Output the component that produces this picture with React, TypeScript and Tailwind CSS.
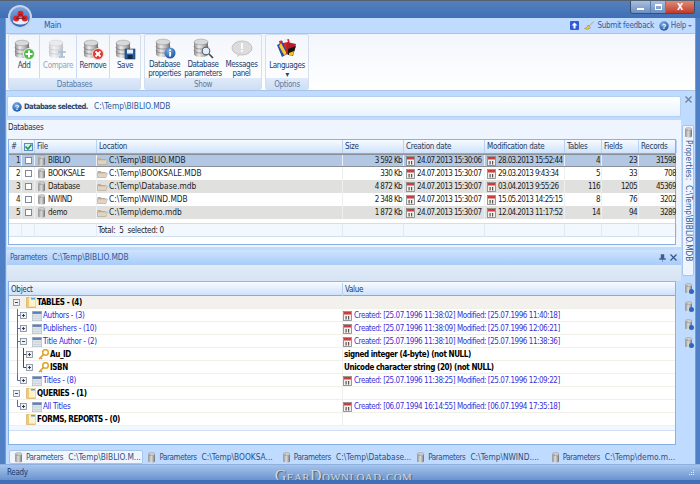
import React from "react";

const Defs = () => (
  <svg width="0" height="0" className="absolute">
    <defs>
      <linearGradient id="cyl" x1="0" x2="1" y1="0" y2="0">
        <stop offset="0" stopColor="#8d8d8d" />
        <stop offset="0.35" stopColor="#ececec" />
        <stop offset="0.7" stopColor="#b5b5b5" />
        <stop offset="1" stopColor="#6e6e6e" />
      </linearGradient>
      <radialGradient id="blueball" cx="0.4" cy="0.3" r="0.8">
        <stop offset="0" stopColor="#7fb2ec" />
        <stop offset="1" stopColor="#0f4a9c" />
      </radialGradient>
    </defs>
  </svg>
);

function Cyl({ faded }: { faded?: boolean }) {
  return (
    <g opacity={faded ? 0.4 : 1}>
      <path d="M2 4v12c0 2 3 3 7 3s7-1 7-3V4z" fill="url(#cyl)" />
      <ellipse cx="9" cy="4" rx="7" ry="2.8" fill="#d9d9d9" stroke="#8a8a8a" strokeWidth="0.5" />
      <path d="M2 8c0 2 3 3 7 3s7-1 7-3M2 12c0 2 3 3 7 3s7-1 7-3" fill="none" stroke="#7d7d7d" strokeWidth="0.7" />
    </g>
  );
}

function RibbonIcon({ kind }: { kind: string }) {
  if (kind === "messages")
    return (
      <svg width="22" height="20" viewBox="0 0 22 20">
        <ellipse cx="11" cy="9" rx="10" ry="7" fill="#dcdcdc" stroke="#c2c2c2" />
        <path d="M7 14l-1 4 5-3z" fill="#cfcfcf" />
        <rect x="10" y="4" width="2" height="6" fill="#fafafa" />
        <rect x="10" y="11" width="2" height="2" fill="#fafafa" />
      </svg>
    );
  if (kind === "lang")
    return (
      <svg width="22" height="22" viewBox="0 0 22 22">
        <path d="M3 3l10-2 2 12-9 3z" fill="#d9232e" />
        <path d="M1 7l6-3 4 12-5 3z" fill="#2b46b5" />
        <path d="M5 5l6 11-3 1L3 8z" fill="#f0d020" />
        <path d="M11 4l9 2-3 12-7-2z" fill="#b51d2c" />
        <path d="M12 11l8-3-2 6-6 3z" fill="#141414" />
        <path d="M13 15l5-2-1 4-4 1z" fill="#f3c21a" />
        <path d="M6 2l5-1 1 3-5 1z" fill="#f4f4f4" />
      </svg>
    );
  return (
    <svg width="22" height="21" viewBox="0 0 22 21">
      <Cyl faded={kind === "compare"} />
      {kind === "add" && (
        <g>
          <circle cx="16" cy="15" r="5.5" fill="#4db84a" stroke="#e9f7e6" />
          <path d="M16 11.5v7M12.5 15h7" stroke="#fff" strokeWidth="2" />
        </g>
      )}
      {kind === "compare" && <path d="M11 13h8M15 11v7M12 18h6" stroke="#a9bdd6" strokeWidth="1.4" fill="none" />}
      {kind === "remove" && (
        <g>
          <circle cx="16" cy="15" r="5.5" fill="#d9382e" stroke="#f6d9d5" />
          <path d="M13.5 12.5l5 5M18.5 12.5l-5 5" stroke="#fff" strokeWidth="1.8" />
        </g>
      )}
      {kind === "save" && (
        <g>
          <rect x="11" y="10" width="10" height="10" fill="#2d5f9e" stroke="#173b6b" strokeWidth="0.6" />
          <rect x="13" y="10.5" width="6" height="4" fill="#e6eef8" />
          <rect x="13.5" y="16" width="5" height="4" fill="#13294a" />
        </g>
      )}
      {kind === "info" && (
        <g>
          <circle cx="16" cy="15" r="5.5" fill="url(#blueball)" />
          <rect x="15.2" y="14" width="1.8" height="4.5" fill="#fff" />
          <rect x="15.2" y="11.5" width="1.8" height="1.6" fill="#fff" />
        </g>
      )}
      {kind === "search" && (
        <g>
          <circle cx="14" cy="13" r="3.8" fill="#e4eef8" stroke="#55606c" strokeWidth="1.1" />
          <path d="M17 16l4 4" stroke="#45494e" strokeWidth="1.7" />
        </g>
      )}
    </svg>
  );
}

function RBtn({ kind, lines, w, muted, sep }: { kind: string; lines: string[]; w: string; muted?: boolean; sep?: boolean }) {
  return (
    <div className={`flex flex-col items-center pt-[3px] ${w} ${sep ? "border-r border-r-[#c9dcf4]" : ""}`}>
      <div className="h-[22px] flex items-center justify-center">
        <RibbonIcon kind={kind} />
      </div>
      <div className={`mt-[1px] text-center leading-[9px] tracking-[-0.4px] whitespace-nowrap ${muted ? "text-[#98a2ad]" : "text-[#22406f]"}`}>
        {lines.map((l) => (
          <div key={l}>{l}</div>
        ))}
      </div>
    </div>
  );
}

function RGroup({ title, width, children }: { title: string; width: string; children: React.ReactNode }) {
  return (
    <div className={`${width} h-[56px] flex flex-col rounded-[2px] border border-[#d3dfef] bg-gradient-to-b from-[#f3f6fb] to-[#ffffff]`}>
      <div className="flex-1 flex min-h-0">{children}</div>
      <div className="h-[11px] shrink-0 bg-gradient-to-b from-[#dfeafa] to-[#cfdff3] text-center leading-[13px] text-[#5b7aa8]">{title}</div>
    </div>
  );
}

const Cal = () => (
  <svg width="9" height="10" viewBox="0 0 9 10" className="shrink-0">
    <rect x="0.5" y="0.5" width="8" height="9" fill="#f3f1ee" stroke="#7f7f7f" strokeWidth="0.8" />
    <rect x="1" y="1" width="7" height="2.5" fill="#cf3b3b" />
    <rect x="2.5" y="5" width="1.2" height="3.5" fill="#555" />
    <rect x="5" y="5" width="1.2" height="3.5" fill="#555" />
  </svg>
);

const SmallDb = () => (
  <svg width="9" height="11" viewBox="0 0 9 11" className="shrink-0">
    <path d="M1 2v7c0 1 1.5 1.6 3.5 1.6S8 10 8 9V2z" fill="url(#cyl)" />
    <ellipse cx="4.5" cy="2" rx="3.5" ry="1.5" fill="#cfcfcf" stroke="#888" strokeWidth="0.4" />
    <path d="M3 2v8" stroke="#666" strokeWidth="0.5" />
  </svg>
);

const FolderIcon = () => (
  <svg width="11" height="9" viewBox="0 0 11 9" className="shrink-0">
    <path d="M0.5 2h3l1 1h4v5.5h-8z" fill="#bfae9a" />
    <path d="M0.5 4h10l-1.5 4.5h-8.5z" fill="#e0d3c3" stroke="#a99a87" strokeWidth="0.4" />
  </svg>
);

const rows = [
  ["1", "BIBLIO", "C:\\Temp\\BIBLIO.MDB", "3 592 Kb", "24.07.2013 15:30:06", "28.03.2013 15:52:44", "4", "23", "31598"],
  ["2", "BOOKSALE", "C:\\Temp\\BOOKSALE.MDB", "330 Kb", "24.07.2013 15:30:07", "29.03.2013 9:43:34", "5", "33", "708"],
  ["3", "Database", "C:\\Temp\\Database.mdb", "4 872 Kb", "24.07.2013 15:30:07", "03.04.2013 9:55:26", "116", "1205", "45369"],
  ["4", "NWIND", "C:\\Temp\\NWIND.MDB", "2 348 Kb", "24.07.2013 15:30:07", "15.05.2013 14:25:15", "8", "76", "3202"],
  ["5", "demo", "C:\\Temp\\demo.mdb", "1 872 Kb", "24.07.2013 15:30:07", "12.04.2013 11:17:52", "14", "94", "3289"],
];

const cols = "grid grid-cols-[13px_13px_62px_246px_61px_81px_80px_37px_37px_38px]";
const heads = ["#", "", "File", "Location", "Size", "Creation date", "Modification date", "Tables", "Fields", "Records"];
const num = "tracking-[-0.6px]";

function DbRow({ r, i }: { r: string[]; i: number }) {
  const bg = i === 0 ? "bg-[#b2c7e4] border-y border-[#8b8f96]" : i % 2 === 0 ? "bg-[#e0e0de]" : "bg-white";
  const cell = "border-r border-r-[#edf0f3] flex items-center overflow-hidden whitespace-nowrap";
  return (
    <div className={`${cols} h-[13px] text-[#222] ${bg}`}>
      <div className={`${cell} ${num} justify-end pr-[1px]`}>{r[0]}</div>
      <div className={`${cell} justify-center`}>
        <span className="w-[7px] h-[7px] border border-[#7f8a99] bg-white" />
      </div>
      <div className={`${cell} pl-[2px] gap-[1px]`}>
        <SmallDb />
        <span className="ml-[1px]">{r[1]}</span>
      </div>
      <div className={`${cell} gap-[1px]`}>
        <FolderIcon />
        <span className="text-[8.3px] tracking-normal">{r[2]}</span>
      </div>
      <div className={`${cell} ${num} justify-end pr-[1px]`}>{r[3]}</div>
      <div className={`${cell} ${num} pl-[2px] gap-[2px]`}>
        <Cal />
        {r[4]}
      </div>
      <div className={`${cell} ${num} pl-[2px] gap-[2px]`}>
        <Cal />
        {r[5]}
      </div>
      <div className={`${cell} ${num} justify-end pr-[1px]`}>{r[6]}</div>
      <div className={`${cell} ${num} justify-end pr-[1px]`}>{r[7]}</div>
      <div className={`${cell} ${num} justify-end`}>{r[8]}</div>
    </div>
  );
}

function Expander({ x, open }: { x: number; open?: boolean }) {
  return (
    <g>
      <rect x={x + 0.5} y="3.5" width="6" height="6" fill="#eef1f5" stroke="#7c8798" strokeWidth="0.8" />
      <path d={`M${x + 2} 6.5h3`} stroke="#333" strokeWidth="0.9" />
      {!open && <path d={`M${x + 3.5} 5v3`} stroke="#333" strokeWidth="0.9" />}
    </g>
  );
}

const TableIcon = () => (
  <svg width="10" height="10" viewBox="0 0 10 10" className="shrink-0">
    <rect x="0" y="0" width="10" height="10" fill="#dfe4ea" stroke="#8c97a6" strokeWidth="0.6" />
    <rect x="0.5" y="0.5" width="9" height="2.4" fill="#5f7fae" />
    <path d="M0 5h10M0 7.5h10" stroke="#bcc5d0" strokeWidth="0.5" />
  </svg>
);
const NodeFolder = () => (
  <svg width="10" height="12" viewBox="0 0 10 12" className="shrink-0">
    <path d="M0.5 1.5h9v10h-9z" fill="#f1c873" stroke="#c79c45" strokeWidth="0.5" />
    <path d="M3 1.5h6.5v9H3z" fill="#fff2cf" />
    <path d="M5 2h4v1.5H5z" fill="#4aa3dd" />
  </svg>
);
const KeyIcon = () => (
  <svg width="11" height="11" viewBox="0 0 11 11" className="shrink-0">
    <circle cx="7.5" cy="3.5" r="2.8" fill="none" stroke="#e0a92e" strokeWidth="1.6" />
    <path d="M5.5 5.5L1 10M2.5 8.5l1.5 1.5" stroke="#d69c24" strokeWidth="1.5" fill="none" />
  </svg>
);

type Node = { lead: number; lines?: React.ReactNode; icon: React.ReactNode; text: string; cls: string; val?: string; valBold?: boolean; shade?: boolean };

const pl = "#3f4fd8";
const branch = (last?: boolean) => <path d={`M16.5 0V${last ? 6.5 : 13}M16.5 6.5H19`} stroke={pl} strokeWidth="0.9" fill="none" />;
const boldC = "font-bold text-black tracking-[-0.4px]";
const linkC = "text-[#2b2bdc]";

const nodes: Node[] = [
  { lead: 24, lines: <Expander x={12} open />, icon: <NodeFolder />, text: "TABLES - (4)", cls: boldC, shade: true },
  { lead: 30, lines: <>{branch()}<Expander x={19} /></>, icon: <TableIcon />, text: "Authors - (3)", cls: linkC, val: "Created: [25.07.1996 11:38:02] Modified: [25.07.1996 11:40:18]" },
  { lead: 30, lines: <>{branch()}<Expander x={19} /></>, icon: <TableIcon />, text: "Publishers - (10)", cls: linkC, val: "Created: [25.07.1996 11:38:09] Modified: [25.07.1996 12:06:21]" },
  { lead: 30, lines: <>{branch()}<Expander x={19} open /></>, icon: <TableIcon />, text: "Title Author - (2)", cls: linkC, val: "Created: [25.07.1996 11:38:10] Modified: [25.07.1996 11:38:36]" },
  { lead: 36, lines: <><path d="M16.5 0V13" stroke="#777" strokeWidth="0.9" /><path d="M22.5 0V13M22.5 6.5H25" stroke="#333" strokeWidth="0.9" fill="none" /><Expander x={25} /></>, icon: <KeyIcon />, text: "Au_ID", cls: boldC, val: "signed integer (4-byte) (not NULL)", valBold: true },
  { lead: 36, lines: <><path d="M16.5 0V13" stroke="#777" strokeWidth="0.9" /><path d="M22.5 0V6.5H25" stroke="#333" strokeWidth="0.9" fill="none" /><Expander x={25} /></>, icon: <KeyIcon />, text: "ISBN", cls: boldC, val: "Unicode character string (20) (not NULL)", valBold: true },
  { lead: 30, lines: <>{branch(true)}<Expander x={19} /></>, icon: <TableIcon />, text: "Titles - (8)", cls: linkC, val: "Created: [25.07.1996 11:38:25] Modified: [25.07.1996 12:09:22]" },
  { lead: 24, lines: <Expander x={12} open />, icon: <NodeFolder />, text: "QUERIES - (1)", cls: boldC },
  { lead: 30, lines: <>{branch(true)}<Expander x={19} /></>, icon: <TableIcon />, text: "All Titles", cls: linkC, val: "Created: [06.07.1994 16:14:55] Modified: [06.07.1994 17:35:18]" },
  { lead: 24, icon: <NodeFolder />, text: "FORMS, REPORTS - (0)", cls: boldC },
];

function TreeRow({ n }: { n: Node }) {
  return (
    <div className={`grid grid-cols-[334px_1fr] h-[13px] shrink-0 border-b border-b-[#f0efe8] ${n.shade ? "bg-[#f2f1ed]" : "bg-white"}`}>
      <div className="flex items-center border-r border-r-[#eeeeea] overflow-hidden whitespace-nowrap">
        <svg width={n.lead} height="13" viewBox={`0 0 ${n.lead} 13`} className="shrink-0 -ml-[8px]">
          {n.lines}
        </svg>
        <span className="ml-[1px] flex">{n.icon}</span>
        <span className={`ml-[1px] ${n.cls}`}>{n.text}</span>
      </div>
      <div className={`flex items-center gap-[2px] whitespace-nowrap ${n.valBold ? "pl-[1px] font-bold text-black tracking-[-0.4px]" : "text-[#3a30d8] tracking-[-0.45px]"}`}>
        {n.val && !n.valBold && <Cal />}
        {n.val}
      </div>
    </div>
  );
}

const Tab = ({ path, active }: { path: string; active?: boolean }) => (
  <div className={`w-[134.5px] h-[14px] flex items-center pl-[4px] whitespace-nowrap text-[#2e4f80] rounded-[2px] ${active ? "bg-[#eff5fd] border border-[#a4c4ec]" : ""}`}>
    <SmallDb />
    <span className="ml-[3px] tracking-[-0.4px]">Parameters</span>
    <span className="ml-[5px] text-[8.3px] tracking-normal">{path}</span>
  </div>
);

const HelpBall = () => (
  <svg width="10" height="10" viewBox="0 0 10 10" className="shrink-0">
    <circle cx="5" cy="5" r="4.7" fill="url(#blueball)" />
    <text x="5" y="7.8" textAnchor="middle" fontSize="7.5" fontWeight="700" fill="#fff" fontFamily="Liberation Sans">?</text>
  </svg>
);

export default function App() {
  return (
    <div className="relative w-[700px] h-[484px] overflow-hidden flex flex-col bg-[#4f7fc4] text-[8px] leading-[13px] tracking-[-0.3px] font-['DejaVu_Sans_Condensed','Liberation_Sans',sans-serif]">
      <Defs />
      {/* title bar */}
      <div className="h-[18px] shrink-0 flex justify-end bg-gradient-to-b from-[#5580bd] to-[#3f6fb6] border-t border-t-[#54606e]">
        <div className="flex h-[13px] w-[65px] mr-[5px] rounded-b-[3px] overflow-hidden border border-t-0 border-[#3a4f70]">
          <div className="w-[19px] flex items-center justify-center bg-gradient-to-b from-[#a8bfe0] to-[#6d8fc2]">
            <span className="mt-[4px] w-[7px] h-[2px] bg-white" />
          </div>
          <div className="w-[16px] flex items-center justify-center bg-gradient-to-b from-[#a8bfe0] to-[#6d8fc2] border-x border-x-[#5d7eaf]">
            <span className="w-[7px] h-[6px] border border-t-2 border-white" />
          </div>
          <div className="flex-1 flex items-center justify-center bg-gradient-to-b from-[#dc8a78] to-[#bf3a28] text-white font-bold text-[9px] leading-none">X</div>
        </div>
      </div>

      {/* logo orb */}
      <div className="absolute left-[8px] top-[5px] w-[24px] h-[24px] rounded-full border-2 border-[#c6d5e8] bg-gradient-to-b from-[#7fa6dc] to-[#2f68bf] flex items-center justify-center">
        <svg width="17" height="15" viewBox="0 0 16 14">
          <ellipse cx="8" cy="10.5" rx="7" ry="3.2" fill="#e8eef8" />
          <circle cx="8" cy="3.5" r="2.8" fill="#d8232a" />
          <circle cx="4" cy="8" r="2.8" fill="#d8232a" />
          <circle cx="12" cy="8" r="2.8" fill="#d8232a" />
          <path d="M8 3.5L4 8M8 3.5l4 4.5M4 8h8" stroke="#7d0f14" strokeWidth="0.8" />
        </svg>
      </div>

      <div className="flex-1 min-h-0 flex flex-col ml-[5px] mr-[4px] bg-[#bfdbff] border-x border-x-[#7b9cc8]">
        {/* tab strip */}
        <div className="h-[15px] shrink-0 flex items-center pl-[38px] pr-[2px] text-[#22406f] bg-[#bfdbff]">
          <span className="text-[#2a5a9e] text-[8.5px]">Main</span>
          <div className="ml-auto flex items-center text-[#3a5a95]">
            <span className="w-[9px] h-[9px] rounded-[1px] bg-[#3358d8] text-white flex items-center justify-center">
              <svg width="7" height="7" viewBox="0 0 7 7"><path d="M3.5 0.5L6.5 3.5H4.5V6.5H2.5V3.5H0.5z" fill="#fff" /></svg>
            </span>
            <svg width="11" height="9" viewBox="0 0 11 9" className="ml-[5px] mr-[2px]">
              <path d="M10 0.5L5 5M0.5 7.5c2 1 5 1 6-1L4 4C3.5 6 2 7 0.5 7.5z" fill="#e8c64f" stroke="#a98b25" strokeWidth="0.6" />
            </svg>
            <span>Submit feedback</span>
            <span className="ml-[5px] mr-[2px]"><HelpBall /></span>
            <span>Help</span>
            <span className="ml-[2px] mr-[1px] border-x-[2px] border-t-[2px] border-x-transparent border-t-[#5a74a0]" />
          </div>
        </div>

        {/* ribbon */}
        <div className="h-[58px] shrink-0 flex gap-[3px] pl-[2px] bg-gradient-to-b from-[#f2f6fc] to-[#ffffff] border-y border-y-[#a9c4e6]">
          <RGroup title="Databases" width="w-[133px]">
            <RBtn kind="add" lines={["Add"]} w="w-[31px]" sep />
            <RBtn kind="compare" lines={["Compare"]} w="w-[37px]" muted sep />
            <RBtn kind="remove" lines={["Remove"]} w="w-[33px]" sep />
            <RBtn kind="save" lines={["Save"]} w="w-[30px]" />
          </RGroup>
          <RGroup title="Show" width="w-[118px]">
            <RBtn kind="info" lines={["Database", "properties"]} w="w-[39px]" />
            <RBtn kind="search" lines={["Database", "parameters"]} w="w-[38px]" />
            <RBtn kind="messages" lines={["Messages", "panel"]} w="w-[39px]" />
          </RGroup>
          <RGroup title="Options" width="w-[44px]">
            <RBtn kind="lang" lines={["Languages", "▾"]} w="w-[42px]" />
          </RGroup>
        </div>

        {/* main area */}
        <div className="flex-1 min-h-0 flex">
          <div className="w-[675px] shrink-0 flex flex-col pl-[1px]">
            {/* info bar */}
            <div className="mt-[5px] h-[21px] shrink-0 flex items-center pl-[4px] rounded-[2px] border border-[#b5d0f0] bg-gradient-to-b from-[#ffffff] to-[#e8f3fe]">
              <HelpBall />
              <span className="ml-[2px] font-bold text-[7.5px] tracking-[-0.5px] text-[#27466f]">Database selected.</span>
              <span className="ml-[6px] text-[8.3px] tracking-normal text-[#2b5a9c]">C:\Temp\BIBLIO.MDB</span>
            </div>

            {/* Databases panel */}
            <div className="mt-[3px] h-[127px] shrink-0 flex flex-col px-[1px] bg-[#eef5fe]">
              <div className="h-[19px] shrink-0 pt-[1px] text-[#1d3152]">Databases</div>
              <div className="h-[106px] w-[668px] shrink-0 flex flex-col border border-[#84b2e8] bg-white">
                <div className={`${cols} h-[14px] shrink-0 border-b border-b-[#7eaee6] bg-gradient-to-b from-[#f8fbff] to-[#cfe2fb] text-[#243a5c]`}>
                  {heads.map((h, i) => (
                    <div key={i} className="border-r border-r-[#b9d2f2] pl-[2px] flex items-center whitespace-nowrap overflow-hidden">
                      {i === 1 ? (
                        <span className="w-[9px] h-[8px] border border-[#5a8abf] bg-[#dcebfa] flex items-center justify-center">
                          <svg width="7" height="6" viewBox="0 0 7 6"><path d="M0.5 2.5L3 5l3.5-4.5" stroke="#1f9a3a" strokeWidth="1.6" fill="none" /></svg>
                        </span>
                      ) : (
                        h
                      )}
                    </div>
                  ))}
                </div>
                {rows.map((r, i) => (
                  <DbRow key={r[0]} r={r} i={i} />
                ))}
                <div className="h-[4px] shrink-0" />
                <div className={`${cols} h-[14px] shrink-0 border-y border-y-[#cfe0f6] bg-[#f3f8fe] text-[#222]`}>
                  {heads.map((h, i) => (
                    <div key={i} className="border-r border-r-[#e3e9f0] pl-[1px] flex items-center whitespace-pre">
                      {i === 3 ? "Total:  5  selected: 0" : ""}
                    </div>
                  ))}
                </div>
              </div>
            </div>

            {/* Parameters panel */}
            <div className="mt-[3px] flex-1 min-h-0 flex flex-col">
              <div className="h-[15px] shrink-0 flex items-center pl-[3px] pr-[4px] bg-gradient-to-b from-[#cfe3fd] to-[#a9ccf8] text-[#2c5a9c]">
                <span className="tracking-[-0.4px]">Parameters</span>
                <span className="ml-[5px] text-[8.3px] tracking-normal">C:\Temp\BIBLIO.MDB</span>
                <svg width="7" height="8" viewBox="0 0 7 8" className="ml-auto">
                  <path d="M2 0.5h3v4h1.5v1h-6v-1H2zM3.5 5.5V8" fill="#3f5f92" stroke="#3f5f92" strokeWidth="0.5" />
                </svg>
                <svg width="7" height="7" viewBox="0 0 7 7" className="ml-[4px]">
                  <path d="M0.5 0.5l6 6M6.5 0.5l-6 6" stroke="#33558a" strokeWidth="1.2" />
                </svg>
              </div>
              <div className="h-[16px] shrink-0 bg-gradient-to-b from-[#e1ebf7] to-[#d5e3f4]" />
              <div className="h-[164px] w-[668px] ml-[1px] shrink-0 flex flex-col border border-[#84b2e8] border-t-[#8db8ec] bg-white">
                <div className="grid grid-cols-[334px_1fr] h-[14px] shrink-0 pt-[1px] border-b border-b-[#7eaee6] bg-gradient-to-b from-[#f8fbff] to-[#cfe2fb] text-[#243a5c]">
                  <div className="border-r border-r-[#b9d2f2] pl-[2px] flex items-center">Object</div>
                  <div className="pl-[2px] flex items-center">Value</div>
                </div>
                {nodes.map((n) => (
                  <TreeRow key={n.text} n={n} />
                ))}
                <div className="h-[5px] shrink-0 bg-[#f3f8fe] border-b border-b-[#cfe0f6]" />
              </div>
              <div className="h-[5px] shrink-0" />
              {/* bottom tabs */}
              <div className="h-[14px] shrink-0 flex pl-[2px]">
                <Tab active path="C:\Temp\BIBLIO.M..." />
                <Tab path="C:\Temp\BOOKSA..." />
                <Tab path="C:\Temp\Database..." />
                <Tab path="C:\Temp\NWIND...." />
                <Tab path="C:\Temp\demo.m..." />
              </div>
            </div>
          </div>

          {/* right sidebar */}
          <div className="flex-1 flex flex-col items-center pt-[3px]">
            <svg width="7" height="7" viewBox="0 0 7 7" className="mt-[2px]">
              <path d="M0.5 0.5l6 6M6.5 0.5l-6 6" stroke="#6b7f9c" strokeWidth="1.2" />
            </svg>
            <div className="mt-[22px] w-[12px] h-[151px] flex flex-col items-center pt-[1px] gap-[2px] rounded-[2px] border border-[#a5c6ee] bg-[#eef5fe]">
              <SmallDb />
              <span className="[writing-mode:vertical-rl] whitespace-pre text-[8.3px] tracking-normal text-[#2d5a9a]">Properties:  C:\Temp\BIBLIO.MDB</span>
            </div>
            <div className="mt-[7px] flex flex-col gap-[7px]">
              {[0, 1, 2, 3].map((i) => (
                <span key={i} className="relative flex">
                  <SmallDb />
                  <span className="absolute right-[-1px] bottom-0 w-[5px] h-[5px] rounded-full bg-[#2c68bd]" />
                </span>
              ))}
            </div>
          </div>
        </div>
      </div>

      {/* status bar */}
      <div className="h-[20px] shrink-0 flex flex-col">
        <div className="h-[16px] flex items-center pl-[7px] pr-[5px] bg-gradient-to-b from-[#a5c4ec] to-[#6a94cf] text-[#1b3a70] border-t border-t-[#8eb1e0]">
          <span>Ready</span>
          <span className="ml-[247px] mt-[5px] text-[16px] text-[#cfd6e0] font-['Liberation_Serif',serif] [font-variant:small-caps] tracking-[0.4px] whitespace-nowrap [text-shadow:1px_1px_1px_#555]">GearDownload.com</span>
          <svg width="8" height="8" viewBox="0 0 8 8" className="ml-auto">
            <path d="M6 1h1v1H6zM4 3h1v1H4zM6 3h1v1H6zM2 5h1v1H2zM4 5h1v1H4zM6 5h1v1H6z" fill="#e4edf8" />
          </svg>
        </div>
        <div className="flex-1 bg-[#3f6fb6]" />
      </div>
    </div>
  );
}
